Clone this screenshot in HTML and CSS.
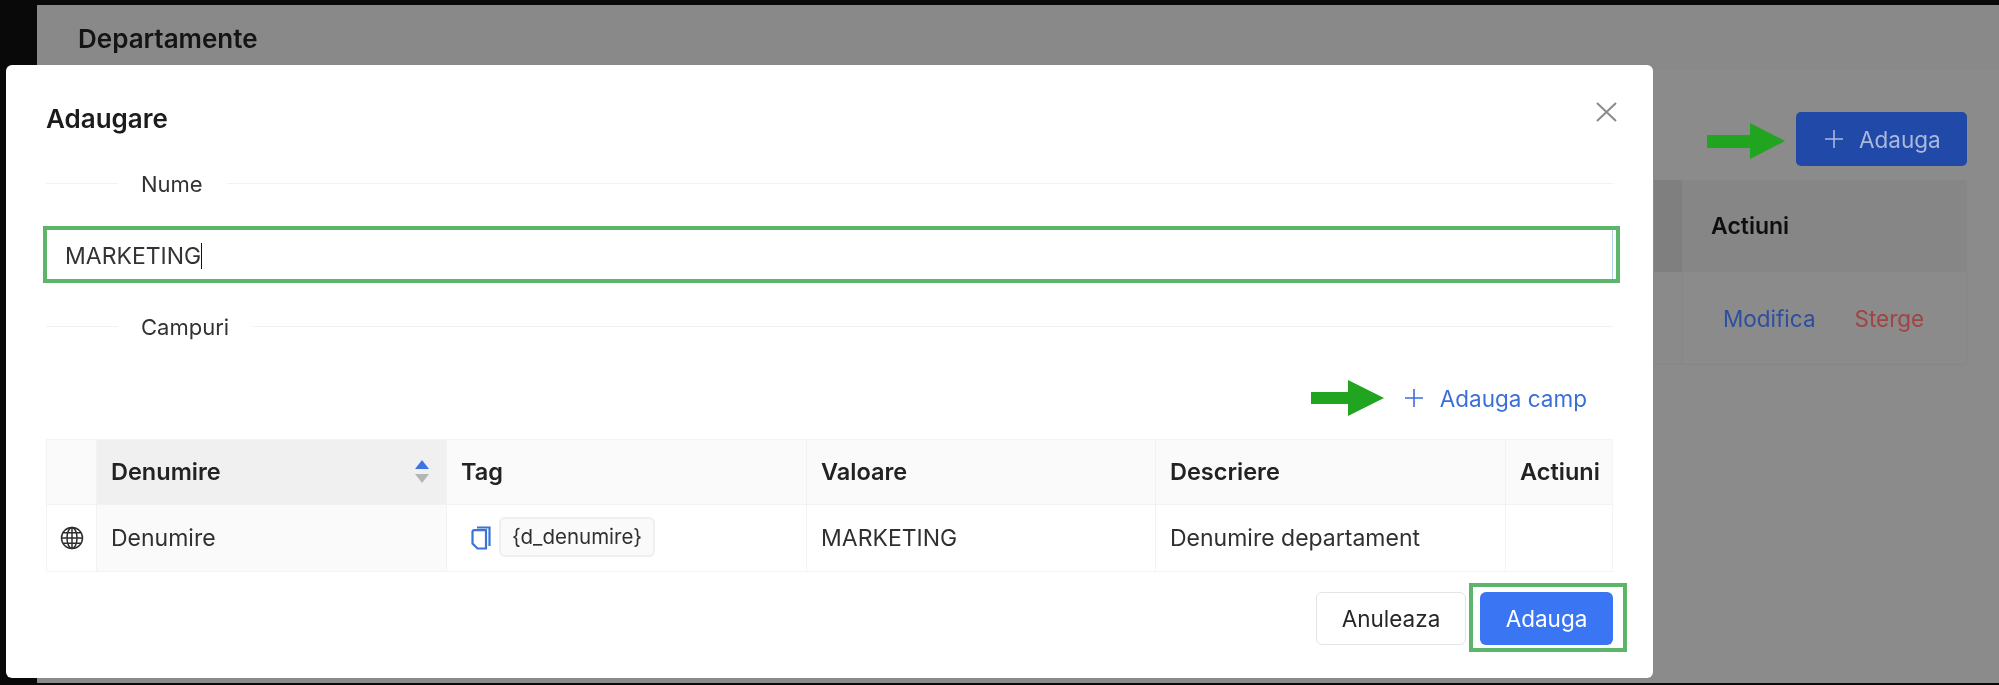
FILE: index.html
```html
<!DOCTYPE html>
<html lang="en">
<head>
    <meta charset="UTF-8">
    <meta name="viewport" content="width=device-width, initial-scale=1.0">
    <title>Departamente</title>
    <link rel="stylesheet" href="styles.css">
</head>
<body>
    <div class="screen">
        <!-- page behind the modal -->
        <div class="app">
            <div class="app-header">
                <h1>Departamente</h1>
            </div>
            <div class="app-toolbar">
                <svg class="arrow arrow-page" viewBox="0 0 78 36"><path d="M0 12H43V0L78 18 43 36V25H0Z"/></svg>
                <button class="page-add">
                    <svg class="plus" viewBox="0 0 20 20"><path d="M10 1V19M1 10H19"/></svg>
                    Adauga
                </button>
            </div>
            <div class="page-table">
                <div class="page-table-head">
                    <div class="page-sorted"></div>
                    <div class="page-actions">Actiuni</div>
                </div>
                <div class="page-table-row">
                    <div class="page-blank"></div>
                    <div class="page-links">
                        <span class="link-edit">Modifica</span>
                        <span class="link-delete">Sterge</span>
                    </div>
                </div>
            </div>
        </div>

        <!-- modal -->
        <div class="modal">
            <svg class="modal-close" viewBox="0 0 21 20"><path d="M1 1L20 19M20 1L1 19"/></svg>
            <h2>Adaugare</h2>

            <div class="divider divider-name"><span>Nume</span></div>
            <div class="name-input">
                <span>MARKETING</span><i class="caret"></i>
                <div class="highlight highlight-input"></div>
            </div>

            <div class="divider divider-fields"><span>Campuri</span></div>
            <div class="add-field">
                <svg class="arrow arrow-field" viewBox="0 0 73 36"><path d="M0 12H37V0L73 18 37 36V24H0Z"/></svg>
                <svg class="plus" viewBox="0 0 20 20"><path d="M10 1V19M1 10H19"/></svg>
                <span>Adauga camp</span>
            </div>

            <table class="fields">
                <colgroup>
                    <col class="col-expand">
                    <col class="col-name">
                    <col class="col-tag">
                    <col class="col-value">
                    <col class="col-desc">
                    <col>
                </colgroup>
                <thead>
                    <tr>
                        <th></th>
                        <th class="sorted">
                            <div class="sort-cell">
                                Denumire
                                <span class="sorter"><i class="sort-up"></i><i class="sort-down"></i></span>
                            </div>
                        </th>
                        <th>Tag</th>
                        <th>Valoare</th>
                        <th>Descriere</th>
                        <th>Actiuni</th>
                    </tr>
                </thead>
                <tbody>
                    <tr>
                        <td class="globe-cell">
                            <svg class="globe" viewBox="0 0 24 24">
                                <circle cx="12" cy="12" r="10.5"/>
                                <ellipse cx="12" cy="12" rx="5" ry="10.5"/>
                                <path d="M12 1.5V22.5M1.5 12H22.5M3 6.7H21M3 17.3H21"/>
                            </svg>
                        </td>
                        <td class="sorted-cell">Denumire</td>
                        <td>
                            <div class="tag-cell">
                                <svg class="copy" viewBox="0 0 20 24">
                                    <path class="copy-back" d="M6 1.5H18.5V20"/>
                                    <path d="M1.5 6C1.5 4.9 2.4 4.2 3.5 4.2H15V22.5H6.5L1.5 17.5Z"/>
                                </svg>
                                <span class="tag">{d_denumire}</span>
                            </div>
                        </td>
                        <td>MARKETING</td>
                        <td>Denumire departament</td>
                        <td></td>
                    </tr>
                </tbody>
            </table>

            <div class="modal-footer">
                <button class="btn">Anuleaza</button>
                <button class="btn btn-primary">
                    Adauga
                    <span class="highlight highlight-button"></span>
                </button>
            </div>
        </div>
    </div>
</body>
</html>
```

FILE: styles.css
```css
* {
    box-sizing: border-box;
}
html, body {
    margin: 0;
    background-color: #090909;
}
body {
    font-family: Inter, "Noto Sans", sans-serif;
    color: #262626;
}
.screen {
    position: relative;
    width: 1999px;
    height: 685px;
    padding: 5px 0 2px 37px;
    overflow: hidden;
    filter: blur(0.5px);
}

/* page behind the modal */
.app {
    height: 100%;
    background-color: #8b8b8b;
}
.app-header {
    height: 65px;
    padding: 2px 0 0 41px;
    display: flex;
    align-items: center;
    background-color: #898989;
}
.app-header h1 {
    margin: 0;
    font-size: 26px;
    font-weight: 600;
    color: #141414;
}
.app-toolbar {
    display: flex;
    justify-content: flex-end;
    align-items: center;
    gap: 11px;
    padding: 42px 32px 14px 0;
}
.page-add {
    display: flex;
    align-items: center;
    gap: 15px;
    width: 171px;
    height: 54px;
    padding-left: 28px;
    border: 0;
    border-radius: 5px;
    background-color: #2149a8;
    color: #a9b8dc;
    font-family: inherit;
    font-size: 22.5px;
}
.page-add .plus {
    stroke: #a9b8dc;
}
.page-table {
    width: 313px;
    margin-left: auto;
    margin-right: 32px;
    border-bottom: 1px solid #868686;
    font-size: 23px;
}
.page-table-head,
.page-table-row {
    display: flex;
    height: 92px;
}
.page-sorted {
    width: 28px;
    background-color: #7f7f7f;
}
.page-blank {
    width: 28px;
    background-color: #8a8a8a;
}
.page-actions {
    flex: 1;
    display: flex;
    align-items: center;
    padding-left: 29px;
    background-color: #868686;
    font-weight: 600;
    color: #0e0e0e;
}
.page-links {
    flex: 1;
    display: flex;
    align-items: center;
    gap: 39px;
    padding-left: 40px;
    border-left: 1px solid #868686;
    border-right: 1px solid #868686;
    font-size: 22.5px;
}
.link-edit {
    color: #2c4f9e;
}
.link-delete {
    color: #a04444;
}

/* modal */
.modal {
    position: absolute;
    left: 6px;
    top: 65px;
    width: 1647px;
    height: 613px;
    padding: 38px 40px 0 40px;
    border-radius: 6px;
    background-color: #fff;
}
.modal h2 {
    margin: 0;
    font-size: 26px;
    font-weight: 600;
    line-height: 32px;
    color: #1c1c1c;
}
.modal-close {
    position: absolute;
    right: 36px;
    top: 37px;
    width: 21px;
    height: 20px;
}
.modal-close path {
    fill: none;
    stroke: #8a8a8a;
    stroke-width: 2;
}
.divider {
    display: flex;
    align-items: center;
    height: 32px;
    font-size: 22px;
    color: #333;
}
.divider::before {
    content: "";
    width: 72px;
    border-top: 1px solid #f2f2f2;
}
.divider::after {
    content: "";
    flex: 1;
    border-top: 1px solid #f2f2f2;
}
.divider span {
    padding: 2px 24px 0 23px;
}
.divider-name {
    margin-top: 32px;
}
.divider-fields {
    margin-top: 30px;
}
.name-input {
    position: relative;
    display: flex;
    align-items: center;
    height: 51px;
    margin-top: 30px;
    padding: 2px 0 0 19px;
    border-right: 1px solid #a9d3f5;
    font-size: 23px;
    color: #333;
}
.caret {
    width: 1px;
    height: 26px;
    background-color: #111;
}
.highlight {
    position: absolute;
    border: 4px solid #5cb56a;
    pointer-events: none;
}
.highlight-input {
    left: -3px;
    top: -3px;
    right: -8px;
    bottom: -3px;
}
.add-field {
    position: relative;
    display: flex;
    justify-content: flex-end;
    align-items: center;
    gap: 16px;
    height: 44px;
    margin-top: 34px;
    padding-right: 26px;
    font-size: 22.5px;
    color: #3b6fd8;
}
.plus {
    width: 20px;
    height: 20px;
    fill: none;
    stroke: #3b6fd8;
    stroke-width: 1.6;
}
.arrow {
    fill: #21a41f;
}
.arrow-page {
    width: 78px;
    height: 36px;
    margin-top: 4px;
}
.arrow-field {
    position: absolute;
    left: 1265px;
    top: 4px;
    width: 73px;
    height: 36px;
}

/* fields table */
.fields {
    width: 100%;
    margin-top: 19px;
    border-collapse: collapse;
    table-layout: fixed;
    border: 1px solid #f4f4f4;
    font-size: 23px;
}
.col-expand {
    width: 50px;
}
.col-name {
    width: 350px;
}
.col-tag {
    width: 360px;
}
.col-value {
    width: 349px;
}
.col-desc {
    width: 350px;
}
.fields th,
.fields td {
    padding: 0 14px;
    border-left: 1px solid #f2f2f2;
    text-align: left;
}
.fields th {
    height: 65px;
    padding-bottom: 2px;
    background-color: #fafafa;
    font-weight: 600;
    font-size: 23.5px;
    color: #222;
}
.fields td {
    height: 67px;
    border-top: 1px solid #f2f2f2;
    color: #303030;
}
.fields th:first-child,
.fields td:first-child {
    border-left: 0;
}
.fields .sorted {
    background-color: #f0f0f0;
}
.fields .sorted-cell {
    background-color: #fafafa;
}
.sort-cell {
    display: flex;
    justify-content: space-between;
    align-items: center;
}
.sorter {
    display: flex;
    flex-direction: column;
    gap: 5px;
    margin-right: 3px;
}
.sorter i {
    width: 0;
    height: 0;
    border-left: 7px solid transparent;
    border-right: 7px solid transparent;
}
.sort-up {
    border-bottom: 9px solid #3b73e8;
}
.sort-down {
    border-top: 9px solid #b5b5b5;
}
.globe-cell {
    text-align: center;
}
.fields .globe-cell {
    padding: 0;
}
.globe {
    display: block;
    width: 24px;
    height: 24px;
    margin: 0 auto;
    fill: none;
    stroke: #2e2e2e;
    stroke-width: 1.5;
}
.tag-cell {
    display: flex;
    align-items: center;
    gap: 8px;
    padding-left: 10px;
}
.copy {
    width: 20px;
    height: 24px;
    fill: none;
    stroke: #3b73d8;
    stroke-width: 2.2;
}
.tag {
    padding: 0 11px;
    height: 40px;
    display: flex;
    align-items: center;
    margin-top: -3px;
    border: 2px solid #efefef;
    border-radius: 6px;
    background-color: #fafafa;
    font-size: 20.5px;
}
.modal-footer {
    display: flex;
    justify-content: flex-end;
    gap: 14px;
    margin-top: 20px;
}
.btn {
    position: relative;
    height: 53px;
    width: 150px;
    border: 1px solid #e4e4e4;
    border-radius: 6px;
    background-color: #fff;
    font-family: inherit;
    font-size: 22.5px;
    color: #262626;
}
.btn-primary {
    width: 133px;
    border: 0;
    background-color: #3a75f3;
    color: #fff;
}
.highlight-button {
    left: -11px;
    top: -9px;
    right: -14px;
    bottom: -7px;
}
```
